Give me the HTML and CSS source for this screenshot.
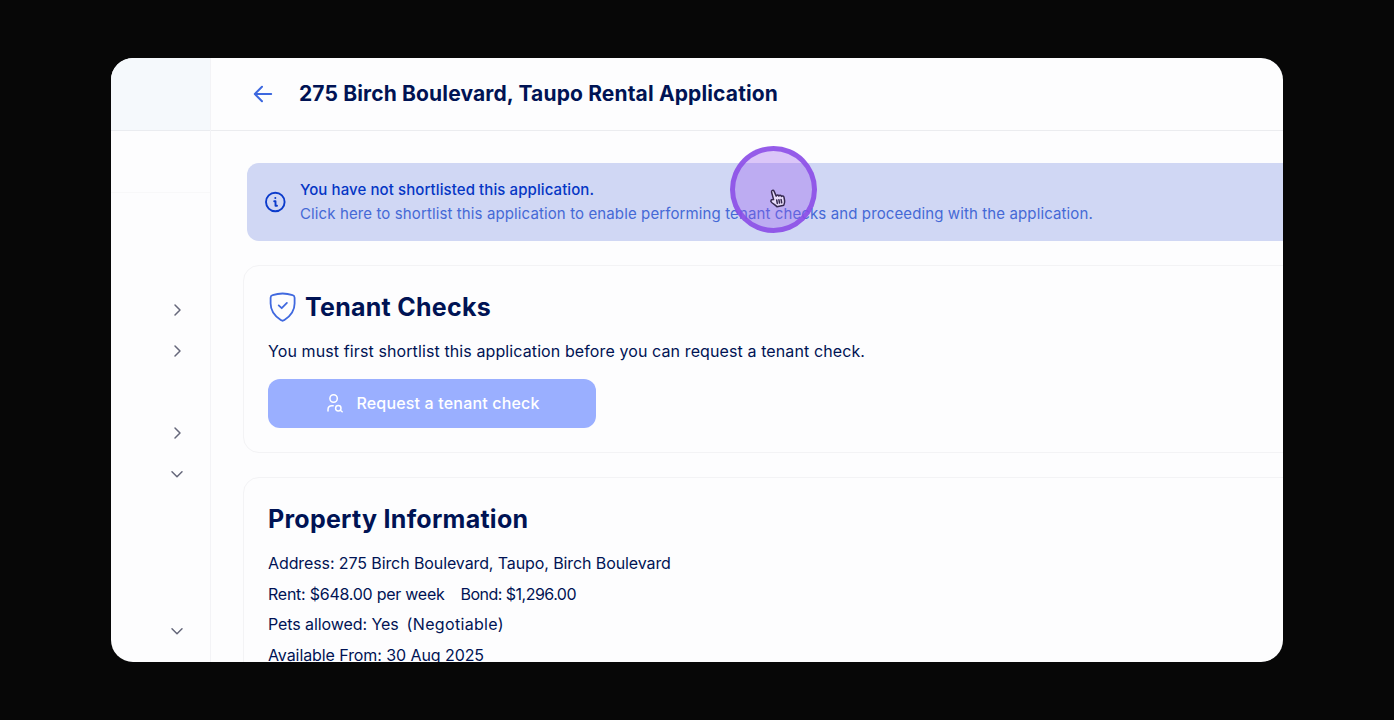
FILE: index.html
```html
<!DOCTYPE html>
<html lang="en">
<head>
<meta charset="utf-8">
<title>Rental Application</title>
<link rel="stylesheet" href="styles.css">
</head>
<body>
<div class="window">
  <aside class="sidebar">
    <div class="sidebar-brand"></div>
    <div class="sidebar-account"></div>
    <nav class="sidebar-nav">
      <svg class="chevron" viewBox="0 0 14 14"><path d="M5 2 10 7l-5 5"/></svg>
      <svg class="chevron" viewBox="0 0 14 14"><path d="M5 2 10 7l-5 5"/></svg>
      <svg class="chevron gap-row" viewBox="0 0 14 14"><path d="M5 2 10 7l-5 5"/></svg>
      <svg class="chevron" viewBox="0 0 14 14"><path d="M2 4.700 7 9.700l5-5"/></svg>
      <svg class="chevron gap-group" viewBox="0 0 14 14"><path d="M2 4.700 7 9.700l5-5"/></svg>
    </nav>
  </aside>
  <div class="page">
    <header class="header">
      <svg class="back" viewBox="0 0 20 18"><path d="M18.2 9H2M9 1.8 1.8 9 9 16.2"/></svg>
      <h1 class="title">275 Birch Boulevard, Taupo Rental Application</h1>
    </header>
    <main class="content">
      <section class="banner">
        <svg class="info" viewBox="0 0 22 22"><circle cx="11.300" cy="11" r="9.300"/><path d="M10.200 10.300h1.300v4.500M11.500 14.800h1.500"/><circle class="dot" cx="11.300" cy="7.100" r="1"/></svg>
        <div class="banner-copy">
          <strong class="banner-title">You have not shortlisted this application.</strong>
          <span class="banner-text">Click here to shortlist this application to enable performing tenant checks and proceeding with the application.</span>
        </div>
      </section>
      <section class="card checks">
        <h2 class="heading">
          <svg class="shield" viewBox="0 0 28 30"><path d="M13.600 1.500c3.500 0 7 .7 10 1.700 1.300.4 2 1.200 2 2.500v5.800c0 7.500-4 12.500-10.200 16.600-1.300.9-2.300.9-3.600 0C5.600 24 1.600 19 1.600 11.500V5.700c0-1.300.7-2.100 2-2.500 3-1 6.500-1.700 10-1.700Z"/><path d="m9.700 13.400 3 2.800 5.200-5.300"/></svg>
          <span class="checks-title">Tenant Checks</span>
        </h2>
        <p class="checks-text">You must first shortlist this application before you can request a tenant check.</p>
        <button class="request">
          <svg class="user-search" viewBox="0 0 18 20"><circle cx="7.600" cy="5.500" r="3.700"/><path d="M2 18v-1.300c0-2.400 1.600-3.900 3.900-3.900h1.300"/><circle cx="12.300" cy="15.200" r="2.700"/><path d="m14.300 17.200 1.900 1.600"/></svg>
          <span>Request a tenant check</span>
        </button>
      </section>
      <section class="card property">
        <h2 class="heading property-title">Property Information</h2>
        <p class="row address">Address: 275 Birch Boulevard, Taupo, Birch Boulevard</p>
        <p class="row rent"><span class="rent-amount">Rent: $648.00 per week</span><span class="bond">Bond: $1,296.00</span></p>
        <p class="row pets"><span class="pets-allowed">Pets allowed: Yes</span><span class="pets-note">(Negotiable)</span></p>
        <p class="row available">Available From: 30 Aug 2025</p>
      </section>
    </main>
  </div>
</div>
<div class="click-ring">
  <svg class="hand" viewBox="0 0 18 20"><path d="M5.600 11.600 3.600 4.200C3.100 2.300 5.400 1.600 6.100 3.300l2.100 4.800c.4-1.400 2.300-1.500 2.600-.1.700-1.100 2.400-.9 2.600.4.900-.9 2.400-.4 2.600.9l.6 3.300c.3 2-.5 3.300-.8 4.600l-6.800 1.500c-1.200-1.700-3.300-2.600-5.300-4.200-1.900-1.600-.4-3.400 1.900-2.900Z"/><path d="m8.700 12 .6 3.400m1.600-3.700.6 3.400m1.600-3.700.6 3.400"/></svg>
</div>
</body>
</html>
```
FILE: styles.css
```css
* { box-sizing: border-box; }
body {
  margin: 0;
  width: 1394px;
  height: 720px;
  padding: 58px 111px;
  overflow: hidden;
  background: #070707;
  color: #001354;
  font-family: Inter, "Noto Sans", sans-serif;
}
svg { display: block; flex: none; fill: none; stroke-linecap: round; stroke-linejoin: round; }
h1, h2, p { margin: 0; white-space: nowrap; }
.window {
  display: flex;
  width: 1172px;
  height: 604px;
  overflow: hidden;
  border-radius: 22px;
  background: #fdfdfe;
}
.sidebar { width: 100px; flex: none; border-right: 1px solid #f3f3f6; }
.sidebar-brand { height: 73px; background: #f5f9fc; border-bottom: 1px solid #eaecf0; }
.sidebar-account { height: 62px; border-bottom: 1px solid #f8f8f9; }
.sidebar-nav { display: flex; flex-direction: column; padding: 109.5px 0 0 59px; gap: 27px; }
.chevron { width: 14px; height: 14px; stroke: #65677a; stroke-width: 1.5; }
.gap-row { margin-top: 41px; }
.gap-group { margin-top: 116.5px; }
.page { flex: 1; min-width: 0; }
.header { display: flex; align-items: center; height: 73px; padding-left: 42px; border-bottom: 1px solid #ebecef; }
.back { width: 20px; height: 18px; stroke: #3d68df; stroke-width: 2; }
.title { margin-left: 26px; font-size: 21px; font-weight: 650; line-height: 32px; letter-spacing: 0.14px; }
.content { padding: 32px 0 0 32px; }
.banner {
  display: flex;
  align-items: center;
  height: 78px;
  margin-left: 4px;
  padding-left: 17px;
  border-radius: 12px 0 0 12px;
  background: #d0d7f4;
  white-space: nowrap;
}
.info { width: 22px; height: 22px; stroke: #0b3bcb; stroke-width: 1.9; }
.info .dot { fill: #0b3bcb; stroke: none; }
.banner-copy { display: flex; flex-direction: column; margin-left: 14px; font-size: 15px; line-height: 24.5px; }
.banner-title { color: #0536c4; font-weight: 550; letter-spacing: 0.09px; }
.banner-text { color: #4569d6; letter-spacing: 0.115px; }
.card { width: 1100px; border: 1px solid #f3f3f5; border-radius: 16px; padding-left: 24px; }
.checks { height: 188px; margin-top: 24px; padding-top: 23px; }
.heading { display: flex; align-items: center; height: 36px; font-size: 25px; font-weight: 650; letter-spacing: 0.27px; }
.shield { width: 28px; height: 30px; margin: 0 8px 0 1px; stroke: #4069df; stroke-width: 1.8; }
.checks-text { margin-top: 14px; font-size: 16px; line-height: 24px; letter-spacing: 0.105px; }
.request {
  display: flex;
  align-items: center;
  justify-content: center;
  gap: 12px;
  width: 328px;
  height: 49px;
  margin-top: 16px;
  padding: 0 0 1px 2px;
  border: 0;
  border-radius: 12px;
  background: #9aafff;
  color: #fff;
  font: 550 16px Inter, sans-serif;
  letter-spacing: 0.17px;
}
.user-search { width: 18px; height: 20px; stroke: #fff; stroke-width: 1.5; }
.property { height: 300px; margin-top: 24px; padding-top: 22.5px; }
.property-title { margin-bottom: 11px; }
.row { display: flex; height: 30.7px; align-items: center; font-size: 16px; }
.address { letter-spacing: -0.1px; }
.rent { gap: 16px; }
.rent-amount { letter-spacing: -0.25px; }
.bond { letter-spacing: -0.52px; }
.pets { gap: 8px; }
.pets-allowed { letter-spacing: -0.08px; }
.pets-note { letter-spacing: 0.33px; }
.available { letter-spacing: -0.08px; }
.click-ring {
  position: absolute;
  left: 730px;
  top: 146px;
  width: 87px;
  height: 87px;
  border: 5px solid rgba(139, 76, 231, 0.87);
  border-radius: 50%;
  background: rgba(151, 91, 236, 0.34);
}
.hand { position: absolute; left: 33px; top: 37px; width: 18px; height: 20px; fill: #e8dcfa; stroke: #35284f; stroke-width: 1.5; }
```
